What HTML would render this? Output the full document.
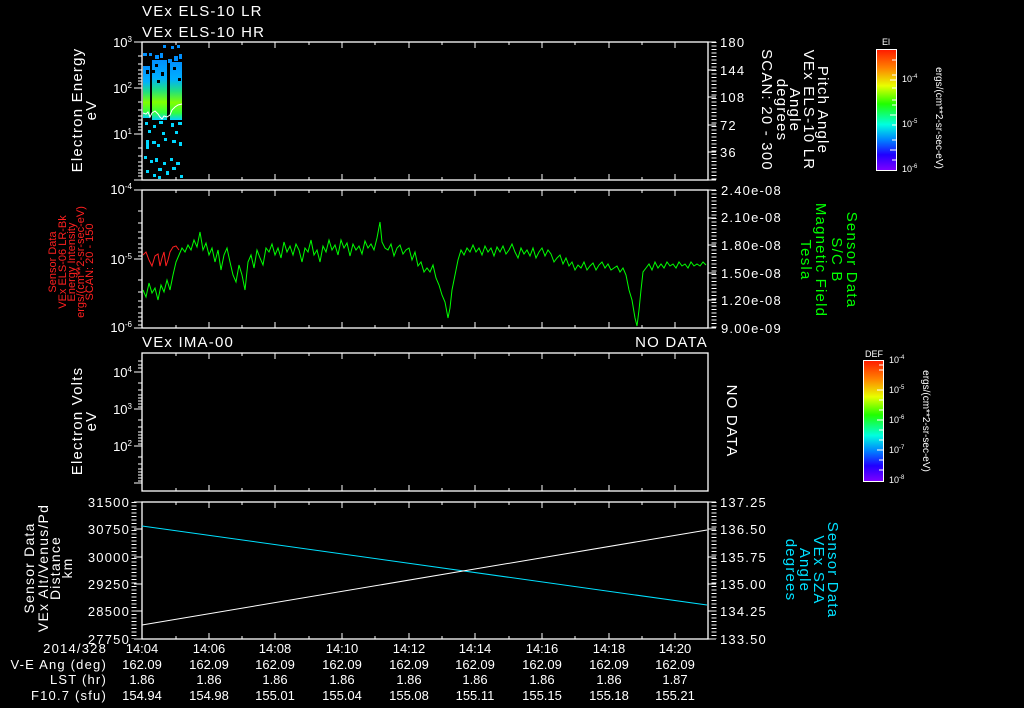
<!DOCTYPE html>
<html><head><meta charset="utf-8"><style>
html,body{margin:0;padding:0;background:#000;}
svg{display:block;}
text{font-family:"Liberation Sans",sans-serif;}
.ls{letter-spacing:1.2px;}
</style></head><body>
<svg width="1024" height="708" viewBox="0 0 1024 708" xmlns="http://www.w3.org/2000/svg">
<defs>
<linearGradient id="cb" x1="0" y1="0" x2="0" y2="1">
<stop offset="0" stop-color="#ff1a00"/><stop offset="0.15" stop-color="#ff8000"/><stop offset="0.3" stop-color="#e8ff00"/><stop offset="0.45" stop-color="#20ff00"/><stop offset="0.62" stop-color="#00ffe0"/><stop offset="0.75" stop-color="#0080ff"/><stop offset="0.87" stop-color="#2000ff"/><stop offset="1" stop-color="#8000ff"/>
</linearGradient>
<linearGradient id="sp" x1="0" y1="0" x2="0" y2="1">
<stop offset="0" stop-color="#0090ff"/><stop offset="0.3" stop-color="#00b0ff"/><stop offset="0.5" stop-color="#20e080"/><stop offset="0.7" stop-color="#80ff00"/><stop offset="0.88" stop-color="#30ff40"/><stop offset="1" stop-color="#00d0ff"/>
</linearGradient>
</defs>
<rect width="1024" height="708" fill="#000"/>
<g fill="#fff" font-size="15" class="ls">
<text x="142" y="16">VEx ELS-10 LR</text>
<text x="142" y="37">VEx ELS-10 HR</text>
<text x="142" y="347">VEx IMA-00</text>
<text x="708" y="347" text-anchor="end">NO DATA</text>
</g>
<!-- spectrogram -->
<g>
<rect x="143" y="66" width="7" height="52" fill="url(#sp)"/>
<rect x="152" y="60" width="15" height="60" fill="url(#sp)"/>
<rect x="170" y="62" width="12" height="58" fill="url(#sp)"/>
<g fill="#000">
<rect x="146" y="70" width="3" height="4"/><rect x="155" y="64" width="3" height="3"/><rect x="161" y="72" width="3" height="4"/><rect x="173" y="67" width="3" height="3"/><rect x="178" y="78" width="3" height="3"/><rect x="157" y="80" width="3" height="3"/><rect x="152" y="70" width="3" height="3"/>
</g>
<g fill="#0090ff">
<rect x="143" y="53" width="4" height="3"/><rect x="149" y="53" width="3" height="3"/><rect x="163" y="45" width="3" height="3"/><rect x="171" y="46" width="3" height="3"/><rect x="177" y="45" width="3" height="3"/>
<rect x="155" y="55" width="4" height="4"/><rect x="160" y="53" width="3" height="5"/><rect x="168" y="59" width="4" height="4"/><rect x="174" y="56" width="4" height="5"/><rect x="179" y="54" width="3" height="5"/>
</g>
<g fill="#00d8ff">
<rect x="145" y="122" width="3" height="3"/><rect x="153" y="125" width="3" height="3"/><rect x="159" y="121" width="4" height="3"/><rect x="171" y="123" width="3" height="4"/><rect x="178" y="122" width="4" height="3"/>
<rect x="146" y="140" width="3" height="9"/><rect x="152" y="141" width="4" height="3"/><rect x="157" y="144" width="3" height="3"/><rect x="164" y="138" width="3" height="3"/><rect x="172" y="140" width="4" height="3"/><rect x="179" y="142" width="3" height="4"/>
<rect x="144" y="156" width="3" height="3"/><rect x="150" y="160" width="3" height="3"/><rect x="155" y="158" width="3" height="4"/><rect x="163" y="162" width="3" height="3"/><rect x="170" y="158" width="3" height="3"/><rect x="176" y="162" width="4" height="3"/>
<rect x="146" y="170" width="3" height="3"/><rect x="153" y="174" width="3" height="3"/><rect x="158" y="168" width="4" height="3"/><rect x="166" y="171" width="3" height="4"/><rect x="172" y="167" width="4" height="3"/><rect x="180" y="175" width="3" height="3"/><rect x="158" y="176" width="3" height="3"/>
<rect x="148" y="130" width="3" height="3"/><rect x="162" y="132" width="3" height="3"/><rect x="175" y="131" width="3" height="3"/>
</g>
<polyline fill="none" stroke="#fff" stroke-width="1" points="143,113 146,114 148,112 150,117 152,113 155,111 158,114 160,117 162,119 164,116 167,117 170,115 172,110 175,107 178,105 182,104"/>
</g>
<!-- panel frames -->
<g fill="none" stroke="#fff" stroke-width="1.3">
<rect x="142" y="42" width="566" height="138"/>
<rect x="142" y="190" width="566" height="138"/>
<rect x="142" y="353" width="566" height="138"/>
<rect x="142" y="502" width="566" height="137"/>
</g>
<!-- time ticks -->
<g stroke="#fff" stroke-width="1">
<path d="M209,42v6M275,42v6M342,42v6M409,42v6M475,42v6M542,42v6M609,42v6M675,42v6M176,42v3M242,42v3M309,42v3M375,42v3M442,42v3M509,42v3M575,42v3M642,42v3
M209,180v-6M275,180v-6M342,180v-6M409,180v-6M475,180v-6M542,180v-6M609,180v-6M675,180v-6M176,180v-3M242,180v-3M309,180v-3M375,180v-3M442,180v-3M509,180v-3M575,180v-3M642,180v-3"/>
<path d="M209,190v6M275,190v6M342,190v6M409,190v6M475,190v6M542,190v6M609,190v6M675,190v6M176,190v3M242,190v3M309,190v3M375,190v3M442,190v3M509,190v3M575,190v3M642,190v3
M209,328v-6M275,328v-6M342,328v-6M409,328v-6M475,328v-6M542,328v-6M609,328v-6M675,328v-6M176,328v-3M242,328v-3M309,328v-3M375,328v-3M442,328v-3M509,328v-3M575,328v-3M642,328v-3"/>
<path d="M209,353v6M275,353v6M342,353v6M409,353v6M475,353v6M542,353v6M609,353v6M675,353v6M176,353v3M242,353v3M309,353v3M375,353v3M442,353v3M509,353v3M575,353v3M642,353v3
M209,491v-6M275,491v-6M342,491v-6M409,491v-6M475,491v-6M542,491v-6M609,491v-6M675,491v-6M176,491v-3M242,491v-3M309,491v-3M375,491v-3M442,491v-3M509,491v-3M575,491v-3M642,491v-3"/>
<path d="M209,502v6M275,502v6M342,502v6M409,502v6M475,502v6M542,502v6M609,502v6M675,502v6M176,502v3M242,502v3M309,502v3M375,502v3M442,502v3M509,502v3M575,502v3M642,502v3
M209,639v-6M275,639v-6M342,639v-6M409,639v-6M475,639v-6M542,639v-6M609,639v-6M675,639v-6M176,639v-3M242,639v-3M309,639v-3M375,639v-3M442,639v-3M509,639v-3M575,639v-3M642,639v-3"/>
<path d="M142,42h-8M142,88h-8M142,134h-8M142,180h-8M142,56h-4M142,64h-4M142,70h-4M142,74h-4M142,78h-4M142,81h-4M142,84h-4M142,102h-4M142,110h-4M142,116h-4M142,120h-4M142,124h-4M142,127h-4M142,130h-4M142,148h-4M142,156h-4M142,162h-4M142,166h-4M142,170h-4M142,173h-4M142,176h-4"/>
<path d="M142,190h-8M142,259h-8M142,328h-8M142,211h-4M142,223h-4M142,232h-4M142,238h-4M142,244h-4M142,248h-4M142,252h-4M142,256h-4M142,280h-4M142,292h-4M142,301h-4M142,307h-4M142,313h-4M142,317h-4M142,321h-4M142,325h-4"/>
<path d="M142,372h-8M142,409h-8M142,446h-8M142,483h-8M142,361h-4M142,365h-4M142,368h-4M142,383h-4M142,390h-4M142,395h-4M142,398h-4M142,401h-4M142,404h-4M142,407h-4M142,420h-4M142,427h-4M142,432h-4M142,435h-4M142,438h-4M142,441h-4M142,444h-4M142,457h-4M142,464h-4M142,469h-4M142,472h-4M142,475h-4M142,478h-4M142,481h-4"/>
<path d="M142,502h-8M142,529h-8M142,557h-8M142,584h-8M142,611h-8M142,639h-8"/>
<path d="M708,42h8M708,70h8M708,97h8M708,125h8M708,152h8M708,180h8"/>
<path d="M708,190h8M708,218h8M708,245h8M708,273h8M708,300h8M708,328h8"/>
<path d="M708,502h8M708,529h8M708,557h8M708,584h8M708,611h8M708,639h8"/>
</g>
<g stroke="#fff" stroke-dasharray="1 2.5">
<path d="M134,502v137M714,42v138M714,190v138M714,502v137" stroke-width="5"/>
</g>
<!-- left tick labels -->
<g fill="#fff" font-size="13" text-anchor="end">
<text x="132" y="47">10<tspan font-size="8" dy="-5">3</tspan></text>
<text x="132" y="93">10<tspan font-size="8" dy="-5">2</tspan></text>
<text x="132" y="139">10<tspan font-size="8" dy="-5">1</tspan></text>
<text x="132" y="194">10<tspan font-size="8" dy="-5">-4</tspan></text>
<text x="132" y="264">10<tspan font-size="8" dy="-5">-5</tspan></text>
<text x="132" y="332">10<tspan font-size="8" dy="-5">-6</tspan></text>
<text x="132" y="377">10<tspan font-size="8" dy="-5">4</tspan></text>
<text x="132" y="414">10<tspan font-size="8" dy="-5">3</tspan></text>
<text x="132" y="451">10<tspan font-size="8" dy="-5">2</tspan></text>
<g class="ls"><text x="130" y="507">31500</text><text x="130" y="534">30750</text><text x="130" y="562">30000</text><text x="130" y="589">29250</text><text x="130" y="616">28500</text><text x="130" y="644">27750</text></g>
</g>
<g fill="#fff" font-size="13" class="ls">
<text x="720" y="47">180</text><text x="720" y="75">144</text><text x="720" y="102">108</text><text x="720" y="130">72</text><text x="720" y="157">36</text>
<text x="721" y="195">2.40e-08</text><text x="721" y="222">2.10e-08</text><text x="721" y="250">1.80e-08</text><text x="721" y="278">1.50e-08</text><text x="721" y="305">1.20e-08</text><text x="721" y="333">9.00e-09</text>
<text x="720" y="507">137.25</text><text x="720" y="534">136.50</text><text x="720" y="562">135.75</text><text x="720" y="589">135.00</text><text x="720" y="616">134.25</text><text x="720" y="644">133.50</text>
</g>
<polyline fill="none" stroke="#00ff00" stroke-width="1" points="143,290 146,297 149,283 152,293 155,288 158,300 161,285 164,292 167,280 170,290 173,275 176,262 179,255 182,248 185,252 188,245 191,250 194,240 197,247 200,232 203,250 206,243 209,255 212,248 215,262 218,250 221,270 224,255 227,248 230,262 233,275 236,282 239,265 242,275 245,290 248,262 251,255 254,268 257,250 260,258 263,265 266,248 269,252 272,244 275,255 278,248 281,258 284,242 287,252 290,246 293,255 296,244 299,250 302,262 305,248 308,252 311,240 314,255 317,250 320,262 323,246 326,252 329,240 332,250 335,245 338,255 341,240 344,248 347,243 350,256 353,244 356,250 359,246 362,254 365,241 368,248 371,244 374,250 377,238 380,222 382,242 385,248 388,250 391,244 394,256 397,248 400,245 403,254 406,250 409,248 412,260 415,252 418,266 421,262 424,272 427,268 430,272 433,265 436,278 439,285 442,295 445,302 448,318 450,308 452,290 455,275 458,260 461,250 464,255 467,248 470,252 473,245 476,252 479,248 482,255 485,246 488,252 491,248 494,256 497,247 500,252 503,246 506,254 509,250 512,244 515,252 518,258 521,248 524,254 527,250 530,256 533,248 536,258 539,252 542,248 545,256 548,250 551,254 554,262 557,258 560,255 563,264 566,258 569,266 572,262 575,270 578,265 581,268 584,262 587,270 590,266 593,263 596,270 599,265 602,262 605,268 608,264 611,270 614,268 617,266 620,272 623,268 626,275 629,290 632,300 635,318 637,326 639,310 641,290 643,272 646,268 649,264 652,270 655,262 658,268 661,264 664,268 667,262 670,266 673,264 676,268 679,262 682,266 685,264 688,268 691,262 694,266 697,264 700,266 703,262 706,265"/>
<polyline fill="none" stroke="#ff2020" stroke-width="1" points="143,255 146,252 149,260 152,266 155,256 158,254 160,266 162,258 164,252 166,266 168,260 170,252 173,247 176,246 179,250"/>
<line x1="142" y1="526" x2="707" y2="605" stroke="#00e0ff" stroke-width="1"/>
<line x1="142" y1="625" x2="707" y2="530" stroke="#fff" stroke-width="1"/>
<!-- left axis titles -->
<g fill="#fff" font-size="15" text-anchor="middle" class="ls">
<text transform="translate(82,110) rotate(-90)">Electron Energy</text>
<text transform="translate(96,110) rotate(-90)">eV</text>
<text transform="translate(82,421) rotate(-90)">Electron Volts</text>
<text transform="translate(96,421) rotate(-90)">eV</text>
<text font-size="14" transform="translate(34,568) rotate(-90)">Sensor Data</text>
<text font-size="14" transform="translate(48,568) rotate(-90)">VEx Alt/Venus/Pd</text>
<text font-size="14" transform="translate(60,568) rotate(-90)">Distance</text>
<text font-size="14" transform="translate(72,568) rotate(-90)">km</text>
</g>
<g fill="#ff2020" font-size="11" text-anchor="middle">
<text transform="translate(56,262) rotate(-90)">Sensor Data</text>
<text transform="translate(66,262) rotate(-90)">VEx ELS-06 LR-Bk</text>
<text transform="translate(75,262) rotate(-90)">Energy Intensity</text>
<text transform="translate(84,262) rotate(-90)">ergs/(cm**2-sr-sec-eV)</text>
<text transform="translate(93,262) rotate(-90)">SCAN: 20 - 150</text>
</g>
<g fill="#fff" font-size="15" text-anchor="middle" class="ls">
<text transform="translate(818,110) rotate(90)">Pitch Angle</text>
<text transform="translate(804,110) rotate(90)">VEx ELS-10 LR</text>
<text transform="translate(790,110) rotate(90)">Angle</text>
<text transform="translate(777,110) rotate(90)">degrees</text>
<text transform="translate(762,110) rotate(90)">SCAN: 20 - 300</text>
<text transform="translate(727,421) rotate(90)">NO DATA</text>
</g>
<g fill="#00ff00" font-size="15" text-anchor="middle" class="ls">
<text transform="translate(847,260) rotate(90)">Sensor Data</text>
<text transform="translate(832,260) rotate(90)">S/C B</text>
<text transform="translate(816,260) rotate(90)">Magnetic Field</text>
<text transform="translate(801,260) rotate(90)">Tesla</text>
</g>
<g fill="#00e0ff" font-size="15" text-anchor="middle" class="ls">
<text transform="translate(828,570) rotate(90)">Sensor Data</text>
<text transform="translate(814,570) rotate(90)">VEx SZA</text>
<text transform="translate(800,570) rotate(90)">Angle</text>
<text transform="translate(786,570) rotate(90)">degrees</text>
</g>
<rect x="876.5" y="49.5" width="20" height="121" fill="url(#cb)" stroke="#fff"/>
<g stroke="#fff"><path d="M896,60h-4M896,75h-4M896,80h-6M896,88h-4M896,100h-4M896,105h-4M896,115h-6M896,125h-4M896,140h-4M896,150h-6M896,160h-4"/></g>
<g fill="#fff" font-size="9"><text x="882" y="45">El</text>
<text x="902" y="82">10<tspan font-size="6" dy="-4">-4</tspan></text>
<text x="902" y="127">10<tspan font-size="6" dy="-4">-5</tspan></text>
<text x="902" y="172">10<tspan font-size="6" dy="-4">-6</tspan></text></g>
<rect x="863.5" y="360.5" width="20" height="121" fill="url(#cb)" stroke="#fff"/>
<g stroke="#fff"><path d="M883,365h-4M883,370h-4M883,390h-6M883,400h-4M883,410h-4M883,420h-6M883,430h-4M883,440h-4M883,450h-6M883,460h-4M883,470h-4"/></g>
<g fill="#fff" font-size="9"><text x="865" y="357">DEF</text>
<text x="889" y="363">10<tspan font-size="6" dy="-4">-4</tspan></text>
<text x="889" y="393">10<tspan font-size="6" dy="-4">-5</tspan></text>
<text x="889" y="423">10<tspan font-size="6" dy="-4">-6</tspan></text>
<text x="889" y="453">10<tspan font-size="6" dy="-4">-7</tspan></text>
<text x="889" y="483">10<tspan font-size="6" dy="-4">-8</tspan></text></g>
<g fill="#fff" font-size="10" text-anchor="middle">
<text transform="translate(936,118) rotate(90)">ergs/(cm**2-sr-sec-eV)</text>
<text transform="translate(923,421) rotate(90)">ergs/(cm**2-sr-sec-eV)</text>
</g>
<g fill="#fff" font-size="13">
<g text-anchor="end" class="ls"><text x="107" y="653">2014/328</text><text x="107" y="669">V-E Ang (deg)</text><text x="107" y="684">LST (hr)</text><text x="107" y="700">F10.7 (sfu)</text></g>
<g text-anchor="middle">
<text x="142" y="653">14:04</text><text x="209" y="653">14:06</text><text x="275" y="653">14:08</text><text x="342" y="653">14:10</text><text x="409" y="653">14:12</text><text x="475" y="653">14:14</text><text x="542" y="653">14:16</text><text x="609" y="653">14:18</text><text x="675" y="653">14:20</text>
<text x="142" y="669">162.09</text><text x="209" y="669">162.09</text><text x="275" y="669">162.09</text><text x="342" y="669">162.09</text><text x="409" y="669">162.09</text><text x="475" y="669">162.09</text><text x="542" y="669">162.09</text><text x="609" y="669">162.09</text><text x="675" y="669">162.09</text>
<text x="142" y="684">1.86</text><text x="209" y="684">1.86</text><text x="275" y="684">1.86</text><text x="342" y="684">1.86</text><text x="409" y="684">1.86</text><text x="475" y="684">1.86</text><text x="542" y="684">1.86</text><text x="609" y="684">1.86</text><text x="675" y="684">1.87</text>
<text x="142" y="700">154.94</text><text x="209" y="700">154.98</text><text x="275" y="700">155.01</text><text x="342" y="700">155.04</text><text x="409" y="700">155.08</text><text x="475" y="700">155.11</text><text x="542" y="700">155.15</text><text x="609" y="700">155.18</text><text x="675" y="700">155.21</text>
</g></g>
</svg>
</body></html>
